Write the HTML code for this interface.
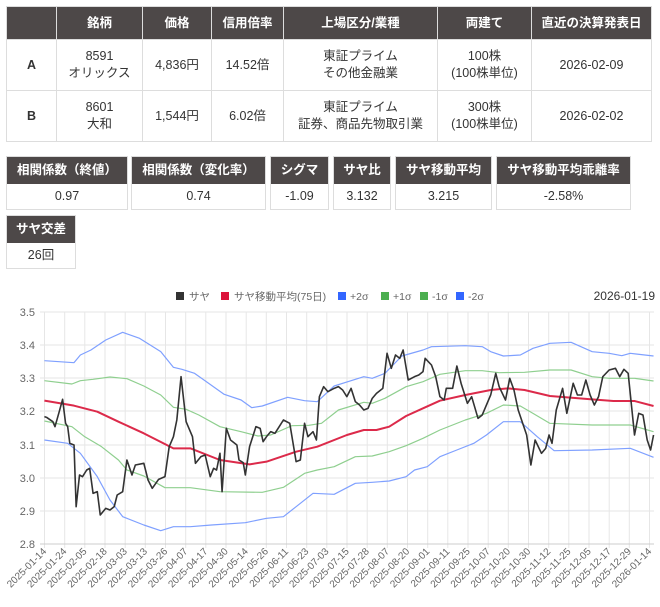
<!DOCTYPE html>
<html><head><meta charset="utf-8">
<style>
body{margin:0;width:660px;height:607px;background:#fff;font-family:"Liberation Sans","Noto Sans CJK JP",sans-serif;color:#333;position:relative;overflow:hidden}
table{border-collapse:collapse;position:absolute;left:6px;top:6px;width:646px;font-size:12.5px;table-layout:fixed}
td,th{border:1px solid #ddd;text-align:center;padding:0;line-height:17px;white-space:nowrap}
th{background:#4d4848;color:#fff;height:32px;font-weight:bold}
td{height:50px}
.box{position:absolute;border:1px solid #ddd;text-align:center;font-size:12.5px}
.box .h{background:#4d4848;color:#fff;font-weight:bold;height:27px;line-height:27px}
.box .v{height:25px;line-height:25px}
svg text{font-family:"Liberation Sans","Noto Sans CJK JP",sans-serif}
</style></head><body>
<table>
<colgroup><col style="width:50px"><col style="width:86px"><col style="width:69px"><col style="width:72px"><col style="width:154px"><col style="width:94px"><col></colgroup>
<tr><th></th><th>銘柄</th><th>価格</th><th>信用倍率</th><th>上場区分/業種</th><th>両建て</th><th>直近の決算発表日</th></tr>
<tr><td><b>A</b></td><td>8591<br>オリックス</td><td>4,836円</td><td>14.52倍</td><td>東証プライム<br>その他金融業</td><td>100株<br>(100株単位)</td><td>2026-02-09</td></tr>
<tr><td><b>B</b></td><td>8601<br>大和</td><td>1,544円</td><td>6.02倍</td><td>東証プライム<br>証券、商品先物取引業</td><td>300株<br>(100株単位)</td><td>2026-02-02</td></tr>
</table>
<div class="box" style="left:6px;top:156px;width:120px"><div class="h">相関係数（終値）</div><div class="v">0.97</div></div>
<div class="box" style="left:131px;top:156px;width:133px"><div class="h">相関係数（変化率）</div><div class="v">0.74</div></div>
<div class="box" style="left:270px;top:156px;width:57px"><div class="h">シグマ</div><div class="v">-1.09</div></div>
<div class="box" style="left:333px;top:156px;width:56px"><div class="h">サヤ比</div><div class="v">3.132</div></div>
<div class="box" style="left:395px;top:156px;width:95px"><div class="h">サヤ移動平均</div><div class="v">3.215</div></div>
<div class="box" style="left:496px;top:156px;width:133px"><div class="h">サヤ移動平均乖離率</div><div class="v">-2.58%</div></div>
<div class="box" style="left:6px;top:215px;width:68px"><div class="h">サヤ交差</div><div class="v">26回</div></div>

<svg style="position:absolute;left:0;top:0" width="660" height="607">
<g font-size="10.5" fill="#666">
<rect x="176" y="292" width="8" height="8" fill="#333"/><text x="189" y="300">サヤ</text>
<rect x="221" y="292" width="8" height="8" fill="#dc143c"/><text x="234" y="300">サヤ移動平均(75日)</text>
<rect x="338" y="292" width="8" height="8" fill="#3366ff"/><text x="350" y="300">+2σ</text>
<rect x="381" y="292" width="8" height="8" fill="#4caf50"/><text x="393" y="300">+1σ</text>
<rect x="420" y="292" width="8" height="8" fill="#4caf50"/><text x="432" y="300">-1σ</text>
<rect x="456" y="292" width="8" height="8" fill="#3366ff"/><text x="468" y="300">-2σ</text>
</g>
<text x="655" y="300" font-size="12" fill="#333" text-anchor="end">2026-01-19</text>
<g stroke="#e6e6e6" stroke-width="1">
<line x1="40" x2="654" y1="312" y2="312"/><line x1="40" x2="654" y1="345" y2="345"/><line x1="40" x2="654" y1="378" y2="378"/><line x1="40" x2="654" y1="411" y2="411"/><line x1="40" x2="654" y1="445" y2="445"/><line x1="40" x2="654" y1="478" y2="478"/><line x1="40" x2="654" y1="511" y2="511"/>
<path d="M44.5 312V548M64.7 312V548M84.8 312V548M105 312V548M125.2 312V548M145.3 312V548M165.5 312V548M185.7 312V548M205.8 312V548M226 312V548M246.2 312V548M266.3 312V548M286.5 312V548M306.7 312V548M326.8 312V548M347 312V548M367.2 312V548M387.3 312V548M407.5 312V548M427.7 312V548M447.8 312V548M468 312V548M488.2 312V548M508.3 312V548M528.5 312V548M548.7 312V548M568.8 312V548M589 312V548M609.2 312V548M629.3 312V548M649.5 312V548"/>
</g>
<line x1="40" x2="654" y1="544" y2="544" stroke="#ccc"/>
<g font-size="11" fill="#666" text-anchor="end">
<text x="35" y="316">3.5</text><text x="35" y="349">3.4</text><text x="35" y="382">3.3</text><text x="35" y="415">3.2</text><text x="35" y="449">3.1</text><text x="35" y="482">3.0</text><text x="35" y="515">2.9</text><text x="35" y="548">2.8</text>
</g>
<g font-size="10" fill="#666" text-anchor="end">
<text transform="translate(47,552) rotate(-45)">2025-01-14</text>
<text transform="translate(67.2,552) rotate(-45)">2025-01-24</text>
<text transform="translate(87.3,552) rotate(-45)">2025-02-05</text>
<text transform="translate(107.5,552) rotate(-45)">2025-02-18</text>
<text transform="translate(127.7,552) rotate(-45)">2025-03-03</text>
<text transform="translate(147.8,552) rotate(-45)">2025-03-13</text>
<text transform="translate(168,552) rotate(-45)">2025-03-26</text>
<text transform="translate(188.2,552) rotate(-45)">2025-04-07</text>
<text transform="translate(208.3,552) rotate(-45)">2025-04-17</text>
<text transform="translate(228.5,552) rotate(-45)">2025-04-30</text>
<text transform="translate(248.7,552) rotate(-45)">2025-05-14</text>
<text transform="translate(268.8,552) rotate(-45)">2025-05-26</text>
<text transform="translate(289,552) rotate(-45)">2025-06-11</text>
<text transform="translate(309.2,552) rotate(-45)">2025-06-23</text>
<text transform="translate(329.3,552) rotate(-45)">2025-07-03</text>
<text transform="translate(349.5,552) rotate(-45)">2025-07-15</text>
<text transform="translate(369.7,552) rotate(-45)">2025-07-28</text>
<text transform="translate(389.8,552) rotate(-45)">2025-08-07</text>
<text transform="translate(410,552) rotate(-45)">2025-08-20</text>
<text transform="translate(430.2,552) rotate(-45)">2025-09-01</text>
<text transform="translate(450.3,552) rotate(-45)">2025-09-11</text>
<text transform="translate(470.5,552) rotate(-45)">2025-09-25</text>
<text transform="translate(490.7,552) rotate(-45)">2025-10-07</text>
<text transform="translate(510.8,552) rotate(-45)">2025-10-20</text>
<text transform="translate(531,552) rotate(-45)">2025-10-30</text>
<text transform="translate(551.2,552) rotate(-45)">2025-11-12</text>
<text transform="translate(571.3,552) rotate(-45)">2025-11-25</text>
<text transform="translate(591.5,552) rotate(-45)">2025-12-05</text>
<text transform="translate(611.7,552) rotate(-45)">2025-12-17</text>
<text transform="translate(631.8,552) rotate(-45)">2025-12-29</text>
<text transform="translate(652,552) rotate(-45)">2026-01-14</text>
</g>
<g transform="translate(0,280) scale(0.42301,0.33333)" fill="none" stroke-linejoin="round">
<polyline vector-effect="non-scaling-stroke" stroke="#7fa0ff" stroke-width="1.2" points="105,242 175,248 190,225 215,210 250,180 290,157 330,175 380,215 410,262 430,268 460,280 530,343 570,360 595,383 620,378 680,352 720,362 750,365 790,318 860,290 880,295 910,280 950,228 1000,210 1020,200 1100,197 1140,200 1160,215 1190,228 1230,225 1260,205 1300,190 1350,187 1400,215 1440,220 1470,227 1490,220 1545,228"/>
<polyline vector-effect="non-scaling-stroke" stroke="#8fcf8f" stroke-width="1.2" points="105,302 170,312 190,302 220,298 260,291 300,296 340,318 380,345 410,382 440,388 470,405 520,440 570,455 610,468 640,465 690,437 730,436 760,430 800,390 860,367 880,370 910,355 960,320 1000,305 1040,283 1100,272 1140,272 1180,278 1240,277 1300,270 1350,270 1400,290 1440,295 1500,295 1545,303"/>
<polyline vector-effect="non-scaling-stroke" stroke="#dc2a4a" stroke-width="2" points="105,362 175,377 230,395 280,425 340,460 410,505 450,505 520,540 590,553 630,545 700,515 750,500 820,465 860,450 890,450 920,440 960,408 1000,385 1040,362 1100,345 1160,330 1200,325 1240,330 1300,348 1400,358 1450,363 1500,363 1545,378"/>
<polyline vector-effect="non-scaling-stroke" stroke="#8fcf8f" stroke-width="1.2" points="105,423 170,440 200,470 240,500 280,540 300,570 340,588 390,623 450,623 520,635 620,637 670,622 720,580 750,570 790,560 840,530 880,528 920,515 960,497 1000,475 1040,450 1100,420 1150,400 1190,375 1230,378 1260,400 1300,430 1400,435 1490,435 1545,455"/>
<polyline vector-effect="non-scaling-stroke" stroke="#7fa0ff" stroke-width="1.2" points="105,480 160,490 190,520 230,590 260,660 290,710 340,735 380,752 410,740 450,740 500,735 580,728 630,715 670,710 700,680 740,640 790,643 840,610 880,607 920,603 960,590 980,570 1010,560 1040,530 1080,510 1120,490 1150,465 1190,425 1230,425 1270,470 1310,512 1400,510 1490,505 1545,532"/>
<polyline vector-effect="non-scaling-stroke" stroke="#333" stroke-width="1.6" points="105,410 110,412 125,425 130,440 140,395 148,358 155,430 160,440 165,490 175,495 180,680 188,585 195,590 205,570 212,565 220,640 230,635 237,705 250,685 260,690 270,680 277,645 290,635 300,540 312,585 320,555 340,550 350,600 360,625 375,598 390,590 400,500 410,470 418,420 428,290 440,425 455,470 462,550 475,530 485,525 497,590 505,565 512,570 520,520 525,635 535,445 545,480 560,495 565,540 575,548 580,585 590,500 600,460 605,440 615,445 622,485 630,470 640,455 650,460 660,440 670,420 685,430 700,545 710,540 720,430 728,470 740,455 748,480 755,350 765,320 775,335 790,325 800,320 810,330 820,350 830,325 840,365 850,375 860,390 870,385 880,355 890,340 905,325 915,220 925,265 935,225 945,235 953,210 965,300 980,290 990,285 1000,275 1005,235 1020,255 1030,290 1040,350 1050,360 1055,325 1070,325 1080,258 1090,310 1105,370 1115,350 1130,415 1140,405 1150,375 1160,345 1172,280 1180,320 1195,360 1205,295 1215,330 1225,390 1245,465 1255,555 1265,480 1280,520 1290,505 1298,465 1305,490 1315,390 1330,325 1340,400 1355,310 1365,345 1375,345 1385,300 1395,345 1405,375 1415,350 1425,290 1440,270 1455,265 1465,290 1475,268 1485,280 1500,465 1510,400 1520,405 1530,480 1538,510 1545,465"/>
</g>
</svg>
</body></html>
